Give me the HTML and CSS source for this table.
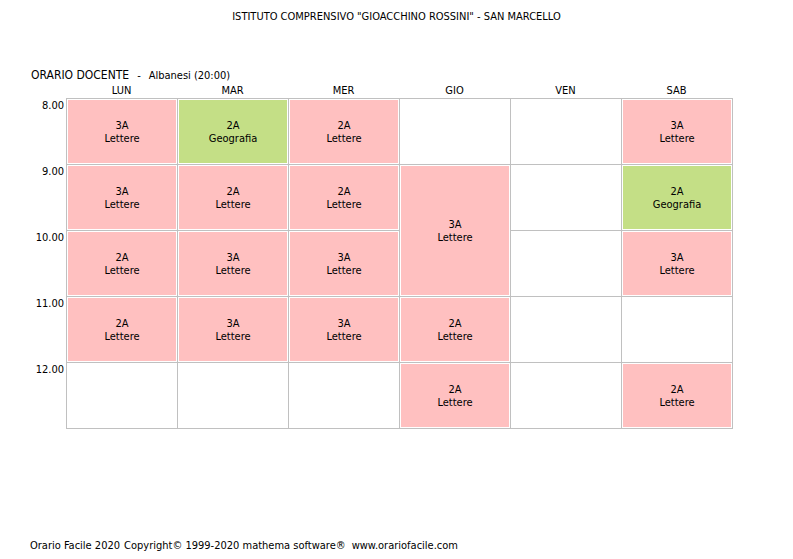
FILE: index.html
```html
<!DOCTYPE html>
<html lang="it">
<head>
<meta charset="utf-8">
<title>Orario Docente - Albanesi</title>
<link rel="stylesheet" href="styles.css">
</head>
<body>
<div class="page">
  <h1 class="title">ISTITUTO COMPRENSIVO "GIOACCHINO ROSSINI" - SAN MARCELLO</h1>
  <div class="heading"><span class="label">ORARIO DOCENTE</span><span class="dash">-</span><span class="name">Albanesi</span><span class="hours">(20:00)</span></div>
  <div class="timetable">
    <div class="days">
      <div class="day">LUN</div>
      <div class="day">MAR</div>
      <div class="day">MER</div>
      <div class="day">GIO</div>
      <div class="day">VEN</div>
      <div class="day">SAB</div>
    </div>
    <div class="body">
      <div class="times">
        <div class="time">8.00</div>
        <div class="time">9.00</div>
        <div class="time">10.00</div>
        <div class="time">11.00</div>
        <div class="time">12.00</div>
      </div>
      <div class="grid">
        <!-- 8.00 -->
        <div class="cell"><div class="lesson pink">3A<br>Lettere</div></div>
        <div class="cell"><div class="lesson green">2A<br>Geografia</div></div>
        <div class="cell"><div class="lesson pink">2A<br>Lettere</div></div>
        <div class="cell"></div>
        <div class="cell"></div>
        <div class="cell"><div class="lesson pink">3A<br>Lettere</div></div>
        <!-- 9.00 -->
        <div class="cell"><div class="lesson pink">3A<br>Lettere</div></div>
        <div class="cell"><div class="lesson pink">2A<br>Lettere</div></div>
        <div class="cell"><div class="lesson pink">2A<br>Lettere</div></div>
        <div class="cell span2"><div class="lesson pink">3A<br>Lettere</div></div>
        <div class="cell"></div>
        <div class="cell"><div class="lesson green">2A<br>Geografia</div></div>
        <!-- 10.00 -->
        <div class="cell"><div class="lesson pink">2A<br>Lettere</div></div>
        <div class="cell"><div class="lesson pink">3A<br>Lettere</div></div>
        <div class="cell"><div class="lesson pink">3A<br>Lettere</div></div>
        <div class="cell"></div>
        <div class="cell"><div class="lesson pink">3A<br>Lettere</div></div>
        <!-- 11.00 -->
        <div class="cell"><div class="lesson pink">2A<br>Lettere</div></div>
        <div class="cell"><div class="lesson pink">3A<br>Lettere</div></div>
        <div class="cell"><div class="lesson pink">3A<br>Lettere</div></div>
        <div class="cell"><div class="lesson pink">2A<br>Lettere</div></div>
        <div class="cell"></div>
        <div class="cell"></div>
        <!-- 12.00 -->
        <div class="cell"></div>
        <div class="cell"></div>
        <div class="cell"></div>
        <div class="cell"><div class="lesson pink">2A<br>Lettere</div></div>
        <div class="cell"></div>
        <div class="cell"><div class="lesson pink">2A<br>Lettere</div></div>
      </div>
    </div>
  </div>
  <footer class="footer"><span>Orario Facile 2020</span><span class="copy">Copyright© 1999-2020 mathema software®</span><span class="site">www.orariofacile.com</span></footer>
</div>
</body>
</html>
```

FILE: styles.css
```css
html, body {
  margin: 0;
  padding: 0;
  background: #ffffff;
}

body {
  font-family: "DejaVu Sans", "Noto Sans", sans-serif;
  font-size: 11px;
  font-stretch: semi-condensed;
  color: #000000;
}

.page {
  display: flex;
  flex-direction: column;
  height: 559px;
  box-sizing: border-box;
}

.title {
  margin: 10px 0 0 0;
  font-size: 11px;
  font-weight: normal;
  line-height: 13px;
  text-align: center;
}

.heading {
  margin: 45px 0 0 31px;
  line-height: 14px;
  display: flex;
  align-items: baseline;
}

.heading .label {
  font-size: 12px;
}

.heading .dash {
  margin-left: 8px;
}

.heading .name {
  margin-left: 8px;
}

.heading .hours {
  margin-left: 3px;
}

.timetable {
  margin-top: 1px;
}

.days {
  display: grid;
  grid-template-columns: repeat(6, 111px);
  margin-left: 66px;
  height: 14px;
}

.day {
  text-align: center;
  line-height: 14px;
}

.body {
  display: flex;
}

.times {
  width: 64px;
  padding: 1px 2px 0 0;
  display: flex;
  flex-direction: column;
}

.time {
  height: 66px;
  text-align: right;
  line-height: 13px;
}

.grid {
  display: grid;
  grid-template-columns: repeat(6, 111px);
  grid-template-rows: repeat(5, 66px);
  border-left: 1px solid #c0c0c0;
  border-top: 1px solid #c0c0c0;
  width: 666px;
}

.cell {
  border-right: 1px solid #c0c0c0;
  border-bottom: 1px solid #c0c0c0;
  padding: 1px;
  display: flex;
  min-width: 0;
}

.span2 {
  grid-row: span 2;
}

.lesson {
  flex: 1;
  display: flex;
  align-items: center;
  justify-content: center;
  text-align: center;
  line-height: 13px;
}

.pink {
  background: #ffc0c0;
}

.green {
  background: #c4df86;
}

.footer {
  margin-top: auto;
  margin-bottom: 7px;
  margin-left: 30px;
  line-height: 13px;
  display: flex;
}

.footer .copy {
  margin-left: 4px;
}

.footer .site {
  margin-left: 6px;
}
```
